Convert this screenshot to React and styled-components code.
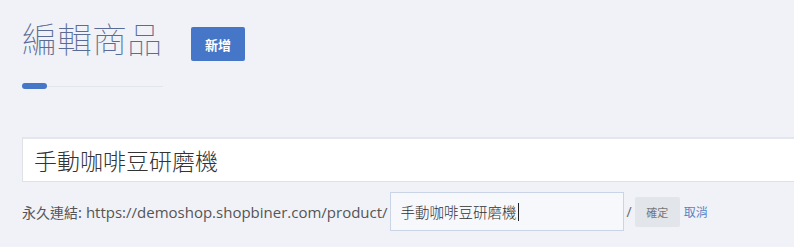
import React from 'react';
import styled, { createGlobalStyle } from 'styled-components';

const GlobalStyle = createGlobalStyle`
  html, body {
    margin: 0;
    padding: 0;
    background: #f0f2f7;
    overflow: hidden;
  }
  body {
    font-family: "Open Sans", "Noto Sans CJK TC", sans-serif;
  }
`;

const Page = styled.div`
  padding: 20px 0 0 22px;
  width: 794px;
  box-sizing: border-box;
`;

const Header = styled.div`
  display: flex;
  align-items: flex-start;
  gap: 29px;
`;

const Title = styled.h1`
  margin: 0;
  font-family: "Noto Sans CJK TC", sans-serif;
  font-weight: 100;
  font-size: 35px;
  line-height: 36px;
  color: #5a6b94;
`;

const AddButton = styled.button`
  margin-top: 7px;
  width: 54px;
  height: 34px;
  border: none;
  border-radius: 2px;
  background: #4676c7;
  color: #fff;
  font-family: "Noto Sans CJK TC", sans-serif;
  font-weight: 700;
  font-size: 13px;
  padding: 0;
`;

const Divider = styled.div`
  display: flex;
  align-items: center;
  margin-top: 22px;
  width: 141px;
`;

const Accent = styled.span`
  width: 25px;
  height: 6px;
  border-radius: 3px;
  background: #4676c7;
`;

const Rule = styled.span`
  flex: 1;
  height: 1px;
  background: #e1e5ec;
`;

const NameInput = styled.div`
  margin-top: 48px;
  margin-right: -20px;
  height: 45px;
  box-sizing: border-box;
  background: #fff;
  border: 1px solid #dde1e8;
  border-top: 2px solid #e3e6ec;
  display: flex;
  align-items: center;
  padding-left: 11px;
  font-family: "Noto Sans CJK TC", sans-serif;
  font-weight: 300;
  font-size: 23px;
  color: #333;
`;

const LinkRow = styled.div`
  display: flex;
  align-items: center;
  margin-top: 10px;
  font-size: 14px;
  color: #555;
`;

const Label = styled.span`
  font-family: "Noto Sans CJK TC", sans-serif;
  font-weight: 400;
  margin-right: 4px;
`;

const Url = styled.span`
  font-family: "Open Sans", sans-serif;
  font-size: 15px;
  margin-right: 2px;
`;

const SlugInput = styled.div`
  width: 234px;
  height: 39px;
  box-sizing: border-box;
  border: 1px solid #c9d5e7;
  background: #f6f8fc;
  display: flex;
  align-items: center;
  padding-left: 10px;
  font-family: "Noto Sans CJK TC", sans-serif;
  font-weight: 300;
  font-size: 14.5px;
  color: #333;
`;

const Caret = styled.span`
  display: inline-block;
  width: 1px;
  height: 18px;
  background: #222;
  margin-left: 1px;
`;

const Slash = styled.span`
  margin: 0 3px 0 3px;
  color: #666;
`;

const ConfirmButton = styled.button`
  width: 45px;
  height: 30px;
  border: none;
  border-radius: 2px;
  background: #e2e5ea;
  color: #777;
  font-family: "Noto Sans CJK TC", sans-serif;
  font-size: 11px;
  padding: 0;
`;

const CancelLink = styled.a`
  margin-left: 4px;
  color: #5a82c4;
  font-family: "Noto Sans CJK TC", sans-serif;
  font-size: 12px;
  text-decoration: none;
`;

export default function App() {
  return (
    <>
      <GlobalStyle />
      <Page>
        <Header>
          <Title>編輯商品</Title>
          <AddButton>新增</AddButton>
        </Header>
        <Divider>
          <Accent />
          <Rule />
        </Divider>
        <NameInput>手動咖啡豆研磨機</NameInput>
        <LinkRow>
          <Label>永久連結:</Label>
          <Url>https://demoshop.shopbiner.com/product/</Url>
          <SlugInput>
            手動咖啡豆研磨機
            <Caret />
          </SlugInput>
          <Slash>/</Slash>
          <ConfirmButton>確定</ConfirmButton>
          <CancelLink href="#">取消</CancelLink>
        </LinkRow>
      </Page>
    </>
  );
}
